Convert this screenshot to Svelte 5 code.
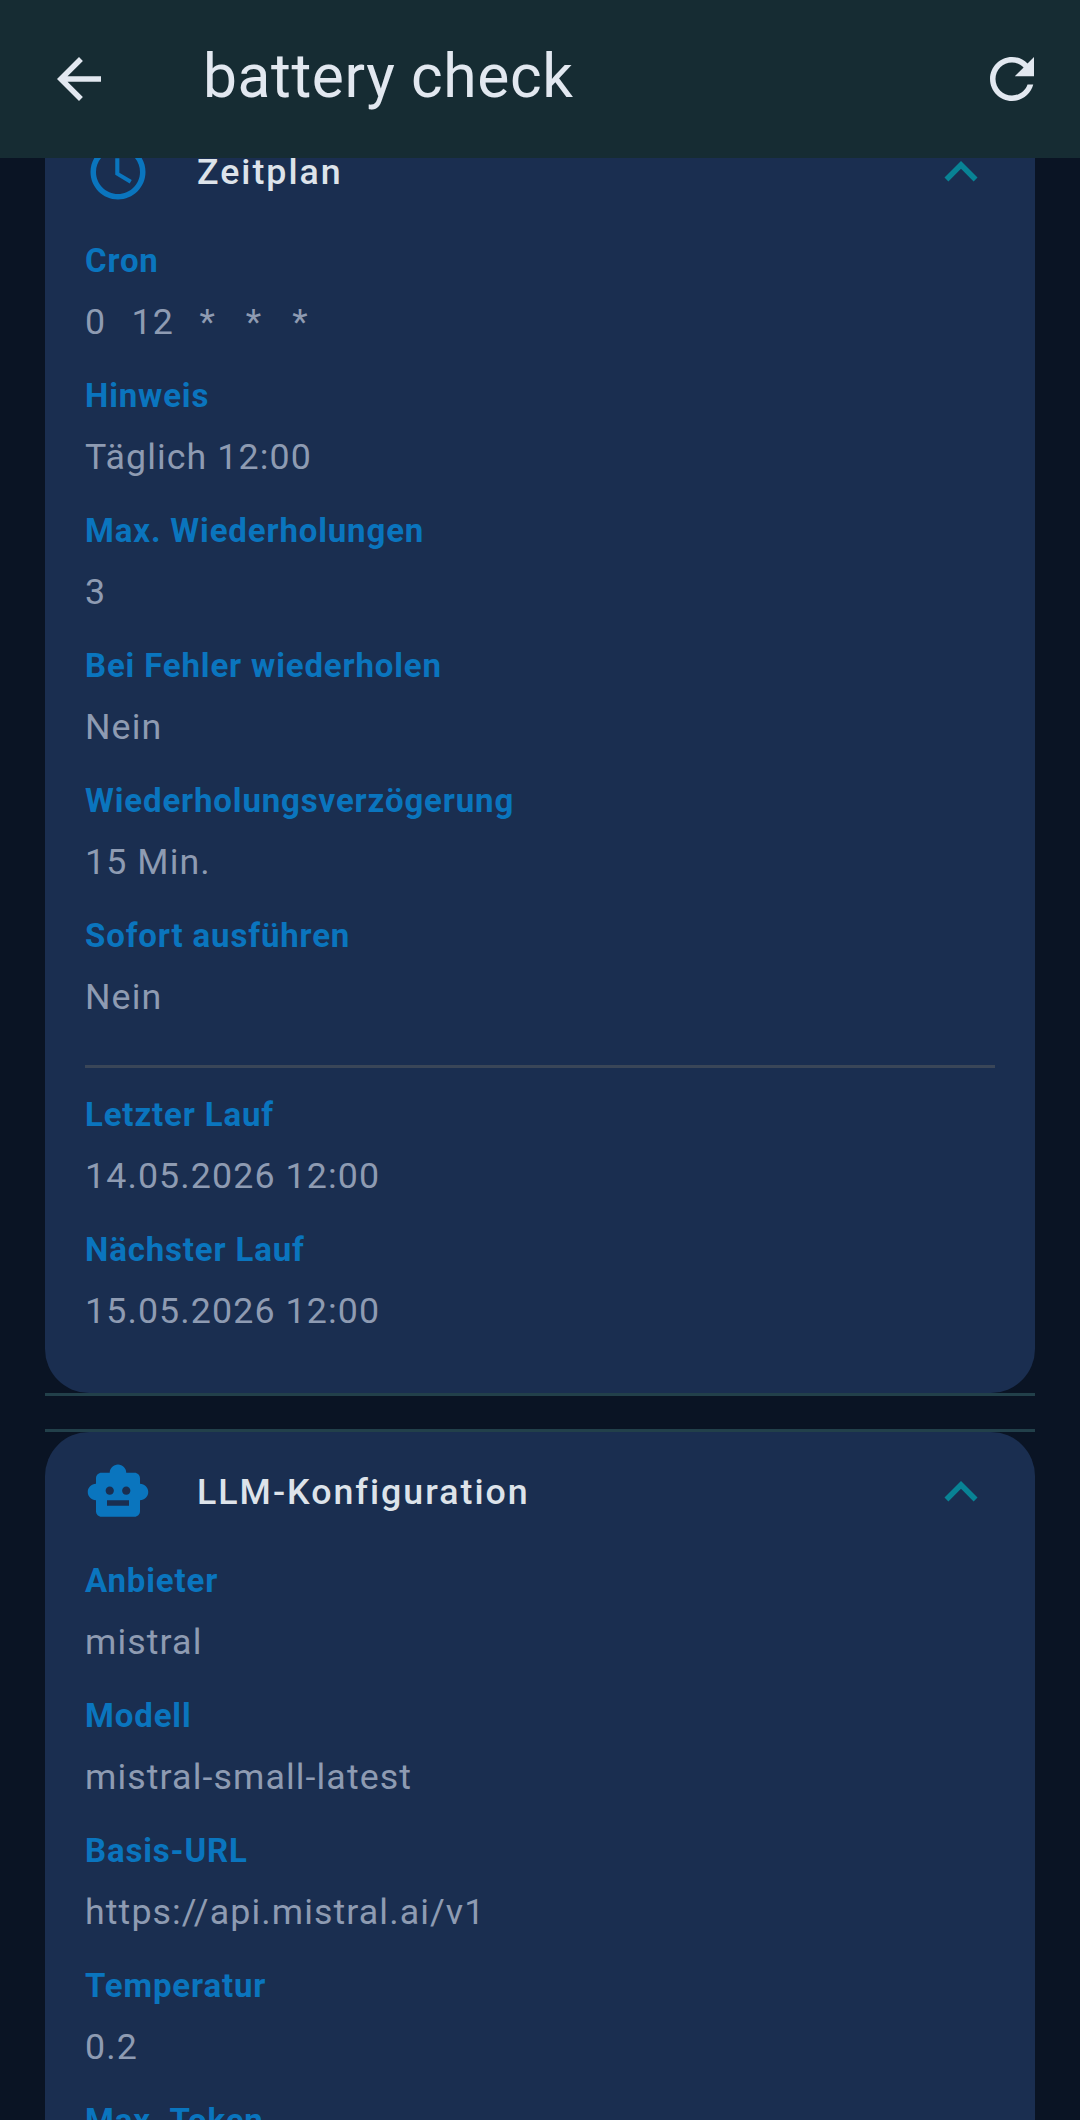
<script lang="ts">
  const zeitplan = [
    { label: "Hinweis", value: "Täglich 12:00" },
    { label: "Max. Wiederholungen", value: "3" },
    { label: "Bei Fehler wiederholen", value: "Nein" },
    { label: "Wiederholungsverzögerung", value: "15 Min." },
    { label: "Sofort ausführen", value: "Nein" },
  ];
  const laeufe = [
    { label: "Letzter Lauf", value: "14.05.2026 12:00" },
    { label: "Nächster Lauf", value: "15.05.2026 12:00" },
  ];
  const llm = [
    { label: "Anbieter", value: "mistral" },
    { label: "Modell", value: "mistral-small-latest" },
    { label: "Basis-URL", value: "https://api.mistral.ai/v1" },
    { label: "Temperatur", value: "0.2" },
    { label: "Max. Token", value: "1024" },
  ];
</script>

{#snippet chevron()}
  <svg class="chevron" viewBox="0 0 24 24"><path d="M12 8l-6 6 1.41 1.41L12 10.83l4.59 4.58L18 14z" /></svg>
{/snippet}

{#snippet field(f)}
  <div class="field">
    <div class="label">{f.label}</div>
    <div class="value">{f.value}</div>
  </div>
{/snippet}

<div class="screen">
  <header class="topbar">
    <svg class="bar-icon back" viewBox="0 0 24 24"><path d="M20 11H7.83l5.59-5.59L12 4l-8 8 8 8 1.41-1.41L7.83 13H20v-2z" /></svg>
    <h1>battery check</h1>
    <svg class="bar-icon" viewBox="0 0 24 24"><path d="M17.65 6.35C16.2 4.9 14.21 4 12 4c-4.42 0-7.99 3.58-7.99 8s3.57 8 7.99 8c3.73 0 6.84-2.55 7.73-6h-2.08c-.82 2.33-3.04 4-5.65 4-3.31 0-6-2.69-6-6s2.69-6 6-6c1.66 0 3.14.69 4.22 1.78L13 11h7V4l-2.35 2.35z" /></svg>
  </header>

  <main class="content">
    <section class="section first">
      <div class="card">
        <div class="card-head">
          <svg class="head-icon" viewBox="0 0 24 24"><path d="M11.99 2C6.47 2 2 6.48 2 12s4.47 10 9.99 10C17.52 22 22 17.52 22 12S17.52 2 11.99 2zM12 20c-4.42 0-8-3.58-8-8s3.58-8 8-8 8 3.58 8 8-3.58 8-8 8z" /><path d="M12.5 7H11v6l5.25 3.15.75-1.23-4.5-2.67z" /></svg>
          <h2>Zeitplan</h2>
          {@render chevron()}
        </div>
        <div class="fields">
          <div class="field">
            <div class="label">Cron</div>
            <div class="value"><span class="tight">{"0   12   "}</span>{"*   *   *"}</div>
          </div>
          {#each zeitplan as f}
            {@render field(f)}
          {/each}
          <div class="rule"></div>
          {#each laeufe as f}
            {@render field(f)}
          {/each}
        </div>
      </div>
    </section>

    <section class="section">
      <div class="card">
        <div class="card-head">
          <svg class="head-icon" viewBox="0 0 24 24"><path d="M20 9V7c0-1.1-.9-2-2-2h-3c0-1.66-1.34-3-3-3S9 3.34 9 5H6c-1.1 0-2 .9-2 2v2c-1.66 0-3 1.34-3 3s1.34 3 3 3v4c0 1.1.9 2 2 2h12c1.1 0 2-.9 2-2v-4c1.66 0 3-1.34 3-3s-1.34-3-3-3zM7.5 11.5C7.5 10.67 8.17 10 9 10s1.5.67 1.5 1.5S9.83 13 9 13s-1.5-.67-1.5-1.5zM16 17H8v-2h8v2zm-1-4c-.83 0-1.5-.67-1.5-1.5S14.17 10 15 10s1.5.67 1.5 1.5S15.83 13 15 13z" /></svg>
          <h2>LLM-Konfiguration</h2>
          {@render chevron()}
        </div>
        <div class="fields">
          {#each llm as f}
            {@render field(f)}
          {/each}
        </div>
      </div>
    </section>
  </main>
</div>

<style>
  :global(body) {
    margin: 0;
    background: #0a1424;
  }

  .screen {
    width: 1080px;
    height: 2120px;
    overflow: hidden;
    background: #0a1424;
    font-family: Roboto, "Liberation Sans", sans-serif;
    display: flex;
    flex-direction: column;
  }

  .topbar {
    height: 158px;
    flex: none;
    box-sizing: border-box;
    display: flex;
    align-items: center;
    padding: 0 35px 0 46px;
    background: #162c33;
    position: relative;
    z-index: 2;
  }

  .topbar h1 {
    flex: 1;
    margin: 0 0 5px 91px;
    font-size: 60.5px;
    font-weight: 400;
    letter-spacing: 0.6px;
    color: #e2e8f0;
  }

  .bar-icon {
    width: 66px;
    height: 66px;
    fill: #e2e8f0;
  }

  .content {
    flex: 1;
    overflow: hidden;
    padding: 0 45px;
  }

  .section {
    border-top: 3px solid #22404a;
    border-bottom: 3px solid #22404a;
    margin-bottom: 33px;
  }

  .section.first {
    margin-top: -49px;
  }

  .card {
    background: #1a2e50;
    border-radius: 44px;
    padding-bottom: 30px;
  }

  .card-head {
    display: flex;
    align-items: center;
    height: 127px;
    padding: 0 41px 7px 40px;
    box-sizing: border-box;
  }

  .head-icon {
    width: 66px;
    height: 66px;
    fill: #0a75be;
    flex: none;
  }

  h2 {
    flex: 1;
    margin: 0 0 0 46px;
    font-size: 35.75px;
    font-weight: 500;
    letter-spacing: 2px;
    color: #dde3ea;
  }

  .chevron {
    width: 66px;
    height: 66px;
    fill: #088395;
  }

  .fields {
    padding: 0 40px;
  }

  .field {
    height: 135px;
    box-sizing: border-box;
  }

  .label {
    font-size: 33px;
    font-weight: 700;
    line-height: 44px;
    letter-spacing: 0.85px;
    color: #0a75be;
  }

  .value {
    margin-top: 17px;
    font-size: 35.75px;
    line-height: 44px;
    letter-spacing: 1.1px;
    white-space: pre;
    color: #8e9bb2;
  }

  .tight {
    word-spacing: -1.5px;
  }

  .rule {
    height: 3px;
    background: #3a4658;
    margin: 16px 0 25px;
  }
</style>
